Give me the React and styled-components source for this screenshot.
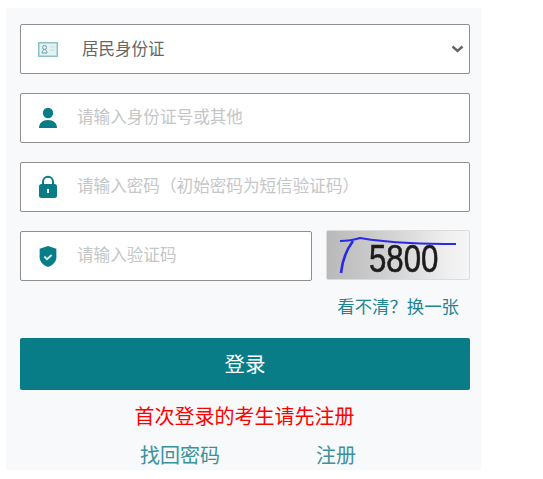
import React from 'react'
import styled, { createGlobalStyle } from 'styled-components'

const cjk = `"Noto Sans CJK SC", "Liberation Sans", sans-serif`
const teal = '#087d88'

const Global = createGlobalStyle`
  html, body { margin: 0; padding: 0; background: #fff; }
  body { font-family: ${cjk}; }
`

const Panel = styled.form`
  box-sizing: border-box;
  width: 475px;
  height: 462px;
  margin: 8px 0 0 6px;
  padding: 16px 11px 0 14px;
  background: #f8f9fb;
  display: flex;
  flex-direction: column;
`

const Field = styled.label`
  box-sizing: border-box;
  flex: ${p => (p.$grow ? 1 : 'none')};
  height: 50px;
  display: flex;
  align-items: center;
  background: #fff;
  border: 1.5px solid #8f8f8f;
  border-radius: 2px;
  padding-left: 17px;
  margin-bottom: ${p => p.$gap ?? 19}px;
`

const IconBox = styled.span`
  flex: none;
  width: 20px;
  height: 24px;
  display: flex;
  align-items: center;
  justify-content: center;
  margin-right: 19px;
`

const Input = styled.input`
  flex: 1;
  min-width: 0;
  border: 0;
  outline: 0;
  background: transparent;
  padding: 0 0 5px;
  font: 16.6px ${cjk};
  color: #555;
  &::placeholder { color: #c4c6c8; opacity: 1; }
`

const Select = styled.select`
  flex: 1;
  min-width: 0;
  height: 100%;
  appearance: none;
  border: 0;
  outline: 0;
  background: transparent;
  padding: 0 0 3px 5px;
  font: 16.5px ${cjk};
  color: #666;
`

const Chevron = styled.svg`
  flex: none;
  margin-right: 5px;
  pointer-events: none;
`

const CaptchaRow = styled.div`
  display: flex;
  gap: 14px;
  align-items: flex-start;
`

const Captcha = styled.div`
  position: relative;
  flex: none;
  width: 144px;
  height: 50px;
  margin-top: -1px;
  overflow: hidden;
  border: 1px solid #dcdcdc;
  border-radius: 2px;
  box-sizing: border-box;
  background: linear-gradient(90deg, #b9b9b9 0%, #cfcfcf 40%, #efefef 85%, #f6f6f6 100%);
`

const CaptchaCode = styled.span`
  position: absolute;
  left: 42px;
  top: 6px;
  font: 39px/44px "Liberation Sans", sans-serif;
  transform: scaleX(0.8);
  transform-origin: left center;
  color: #1c1c1c;
  -webkit-text-stroke: 0.6px #1c1c1c;
  filter: blur(0.5px);
`

const CaptchaLine = styled.svg`
  position: absolute;
  inset: 0;
`

const Refresh = styled.a`
  align-self: flex-end;
  margin: 13px 11px 0 0;
  font-size: 17.4px;
  line-height: 24px;
  color: #1f8590;
`

const Submit = styled.button`
  height: 52px;
  margin-top: 20px;
  padding: 0 0 3px;
  border: 0;
  border-radius: 2px;
  background: ${teal};
  color: #fff;
  font: 20.5px ${cjk};
`

const Notice = styled.div`
  margin: 12px 1px 0 0;
  text-align: center;
  font-size: 20px;
  line-height: 28px;
  color: #ff0000;
`

const Links = styled.div`
  display: flex;
  margin-top: 12px;
  padding-left: 120px;
  gap: 96px;
`

const BottomLink = styled.a`
  font-size: 20px;
  line-height: 26px;
  color: #3a939c;
`

const CardIcon = () => (
  <svg width="20" height="15" viewBox="0 0 20 15">
    <rect x="0.75" y="0.75" width="18.5" height="13.5" fill="#e4f2f2" stroke="#8cc4c6" strokeWidth="1.5" />
    <circle cx="6.5" cy="5.500" r="2" fill="none" stroke="#6f9ea6" strokeWidth="1" />
    <path d="M4 11c.4-2.500 1.300-3.500 2.500-3.500s2.100 1 2.500 3.500z" fill="none" stroke="#6f9ea6" strokeWidth="1" />
    <path d="M12 5h5M12 8h5" stroke="#c4dfe0" strokeWidth="1" />
  </svg>
)

const UserIcon = () => (
  <svg width="20" height="22" viewBox="0 0 20 22" fill={teal}>
    <circle cx="10" cy="6" r="5.200" />
    <path d="M1 21c0-5 3.500-8 9-8s9 3 9 8z" />
  </svg>
)

const LockIcon = () => (
  <svg width="20" height="24" viewBox="0 0 20 24">
    <path d="M5 11V6.800a5 5 0 0 1 10 0V11" fill="none" stroke={teal} strokeWidth="2" />
    <rect x="1" y="9" width="18" height="14" rx="2.500" fill={teal} />
    <rect x="9" y="14" width="2" height="4" fill="#fff" />
  </svg>
)

const ShieldIcon = () => (
  <svg width="20" height="23" viewBox="0 0 18 22">
    <path d="M9 1l8 2.600v8c0 4.600-3.600 7.600-8 9.400-4.400-1.800-8-4.800-8-9.400v-8z" fill={teal} />
    <path d="M5.500 11l2.500 2.500 4.500-4" fill="none" stroke="#d5eeee" strokeWidth="1.800" />
  </svg>
)

const App = () => (
  <Panel onSubmit={e => e.preventDefault()}>
    <Global />
    <Field>
      <IconBox><CardIcon /></IconBox>
      <Select defaultValue="id">
        <option value="id">居民身份证</option>
      </Select>
      <Chevron width="13" height="8" viewBox="0 0 13 8">
        <path d="M1.500 1.500l5 4.500 5-4.500" fill="none" stroke="#666" strokeWidth="2.400" />
      </Chevron>
    </Field>
    <Field>
      <IconBox><UserIcon /></IconBox>
      <Input placeholder="请输入身份证号或其他" />
    </Field>
    <Field>
      <IconBox><LockIcon /></IconBox>
      <Input type="text" placeholder="请输入密码（初始密码为短信验证码）" />
    </Field>
    <CaptchaRow>
      <Field $grow $gap={0}>
        <IconBox><ShieldIcon /></IconBox>
        <Input placeholder="请输入验证码" />
      </Field>
      <Captcha>
        <CaptchaCode>5800</CaptchaCode>
        <CaptchaLine width="142" height="48" viewBox="0 0 142 48">
          <path d="M13 10c8 0 14-1 20-3 12 2 30 4 50 5 20 1 38 1 46 1" fill="none" stroke="#2a2ae6" strokeWidth="2" />
          <path d="M14 42c1-10 3-20 12-32" fill="none" stroke="#2a2ae6" strokeWidth="2.600" />
        </CaptchaLine>
      </Captcha>
    </CaptchaRow>
    <Refresh>看不清？换一张</Refresh>
    <Submit type="submit">登录</Submit>
    <Notice>首次登录的考生请先注册</Notice>
    <Links>
      <BottomLink>找回密码</BottomLink>
      <BottomLink>注册</BottomLink>
    </Links>
  </Panel>
)

export default App
